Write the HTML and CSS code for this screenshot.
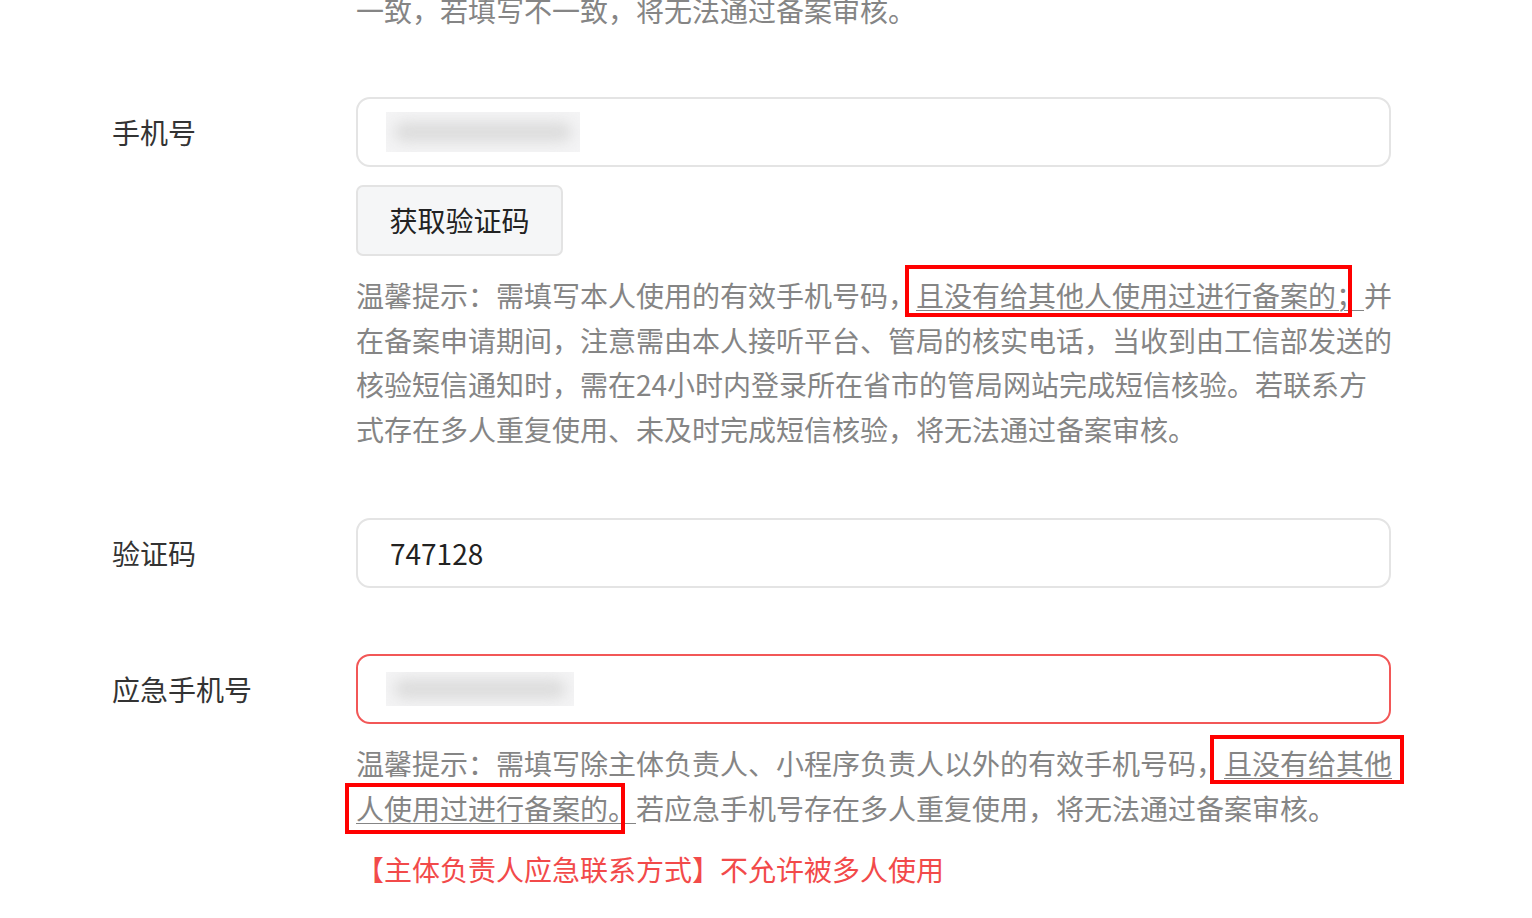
FILE: index.html
```html
<!DOCTYPE html>
<html lang="zh-CN">
  <head>
    <meta charset="UTF-8" />
    <meta name="viewport" content="width=device-width, initial-scale=1.0" />
    <title>备案信息</title>
    <link rel="stylesheet" href="styles.css">
  </head>

  <body>
    <div class="form">
      <!-- 上一项的提示（只露出最后一行） -->
      <div class="form-row form-row-cut">
        <div class="form-label"></div>
        <div class="form-field">
          <p class="hint">一致，若填写不一致，将无法通过备案审核。</p>
        </div>
      </div>

      <div class="form-row">
        <div class="form-label">手机号</div>
        <div class="form-field">
          <div class="input">
            <span class="masked"><span class="masked-bar"></span></span>
          </div>
          <button class="code-btn">获取验证码</button>
          <p class="hint hint-below">温馨提示：需填写本人使用的有效手机号码，<span class="mark mark-1">且没有给其他人使用过进行备案的；</span>并在备案申请期间，注意需由本人接听平台、管局的核实电话，当收到由工信部发送的核验短信通知时，需在24小时内登录所在省市的管局网站完成短信核验。若联系方式存在多人重复使用、未及时完成短信核验，将无法通过备案审核。</p>
        </div>
      </div>

      <div class="form-row">
        <div class="form-label">验证码</div>
        <div class="form-field">
          <div class="input">747128</div>
        </div>
      </div>

      <div class="form-row">
        <div class="form-label">应急手机号</div>
        <div class="form-field">
          <div class="input input-error">
            <span class="masked masked-short"><span class="masked-bar"></span></span>
          </div>
          <p class="hint hint-below">温馨提示：需填写除主体负责人、小程序负责人以外的有效手机号码，<span class="mark mark-2">且没有给其他</span><span class="mark mark-3">人使用过进行备案的。</span>若应急手机号存在多人重复使用，将无法通过备案审核。</p>
          <p class="error-text">【主体负责人应急联系方式】不允许被多人使用</p>
        </div>
      </div>
    </div>
  </body>
</html>
```

FILE: styles.css
```css
body {
  margin: 0;
  background-color: #ffffff;
  font-family: "Noto Sans CJK SC", "Noto Sans", sans-serif;
  color: #333333;
  overflow: hidden;
}

.form {
  padding-left: 112px;
}

.form-row {
  display: flex;
  margin-bottom: 66px;
}

.form-row-cut {
  margin-top: -12px;
  margin-bottom: 64px;
}

.form-label {
  width: 244px;
  flex-shrink: 0;
  font-size: 28px;
  line-height: 70px;
  color: #333333;
}

.form-field {
  width: 1038px;
}

.input {
  box-sizing: border-box;
  width: 1035px;
  height: 70px;
  padding: 0 32px;
  border: 2px solid #e4e4e4;
  border-radius: 14px;
  display: flex;
  align-items: center;
  font-size: 28px;
  color: #222222;
}

.input-error {
  border-color: #f25757;
}

/* 打码的手机号 */
.masked {
  display: block;
  width: 194px;
  height: 40px;
  margin-left: -4px;
  background-color: #f4f4f5;
  overflow: hidden;
}

.masked-short {
  width: 188px;
  height: 34px;
}

.masked-bar {
  display: block;
  margin: 10px 8px 0;
  height: 20px;
  border-radius: 10px;
  background-color: #dcdcdc;
  filter: blur(7px);
}

.masked-short .masked-bar {
  margin-top: 7px;
}

.code-btn {
  display: block;
  box-sizing: border-box;
  width: 207px;
  height: 71px;
  margin-top: 18px;
  background-color: #f5f6f7;
  border: 2px solid #e3e3e3;
  border-radius: 7px;
  font-family: inherit;
  font-size: 28px;
  color: #222222;
}

.hint {
  margin: 0;
  font-size: 28px;
  line-height: 44.8px;
  color: #858585;
}

.hint-below {
  margin-top: 17px;
}

.mark {
  position: relative;
  text-decoration: underline;
  text-underline-offset: 3px;
  text-decoration-thickness: 1px;
}

.mark::after {
  content: "";
  position: absolute;
  border: 4px solid #ff0000;
  box-sizing: border-box;
}

.mark-1::after {
  left: -11px;
  right: 12px;
  top: -10px;
  bottom: -2px;
}

.mark-2::after {
  left: -14px;
  right: -12px;
  top: -8px;
  bottom: -1px;
}

.mark-3::after {
  left: -11px;
  right: 11px;
  top: -5px;
  bottom: -6px;
}

.error-text {
  margin: 16px 0 0;
  font-size: 28px;
  line-height: 44.8px;
  color: #f24a4a;
}
```
